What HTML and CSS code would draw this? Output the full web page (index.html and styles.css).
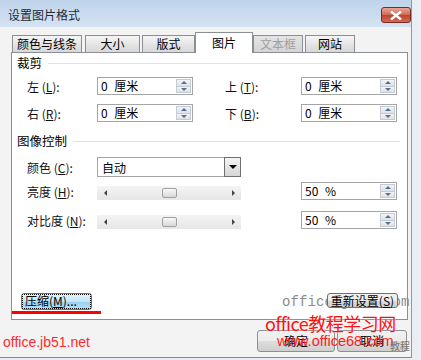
FILE: index.html
```html
<!DOCTYPE html>
<html lang="zh-CN">
<head>
    <meta charset="UTF-8">
    <meta name="viewport" content="width=device-width, initial-scale=1.0">
    <title>设置图片格式</title>
    <link rel="stylesheet" href="styles.css">
</head>
<body>
    <div class="window">
        <div class="titlebar">
            <span class="title">设置图片格式</span>
            <span class="close">
                <svg width="12" height="9" viewBox="0 0 12 9"><path d="M1 0.5 L11 8.5 M11 0.5 L1 8.5" stroke="#fff" stroke-width="2.4"/></svg>
            </span>
        </div>

        <div class="client">
            <div class="tabs">
                <div class="tab w70">颜色与线条</div>
                <div class="tab w55">大小</div>
                <div class="tab w53">版式</div>
                <div class="tab active">图片</div>
                <div class="tab w50 disabled">文本框</div>
                <div class="tab w50">网站</div>
            </div>

            <div class="panel">
                <div class="group">裁剪</div>
                <div class="row crop first">
                    <label class="lbl">左 (<u>L</u>):</label>
                    <div class="spin"><span>0 厘米</span><i class="arrows"><b class="up"></b><b class="down"></b></i></div>
                    <label class="lbl right">上 (<u>T</u>):</label>
                    <div class="spin"><span>0 厘米</span><i class="arrows"><b class="up"></b><b class="down"></b></i></div>
                </div>
                <div class="row crop">
                    <label class="lbl">右 (<u>R</u>):</label>
                    <div class="spin"><span>0 厘米</span><i class="arrows"><b class="up"></b><b class="down"></b></i></div>
                    <label class="lbl right">下 (<u>B</u>):</label>
                    <div class="spin"><span>0 厘米</span><i class="arrows"><b class="up"></b><b class="down"></b></i></div>
                </div>

                <div class="group second">图像控制</div>
                <div class="row color">
                    <label class="lbl">颜色 (<u>C</u>):</label>
                    <div class="combo"><span>自动</span><i class="drop"></i></div>
                </div>
                <div class="row level bright">
                    <label class="lbl">亮度 (<u>H</u>):</label>
                    <div class="slider"><i class="tri left"></i><i class="thumb"></i><i class="tri rt"></i></div>
                    <div class="spin pct"><span>50 %</span><i class="arrows"><b class="up"></b><b class="down"></b></i></div>
                </div>
                <div class="row level contrast">
                    <label class="lbl">对比度 (<u>N</u>):</label>
                    <div class="slider"><i class="tri left"></i><i class="thumb"></i><i class="tri rt"></i></div>
                    <div class="spin pct"><span>50 %</span><i class="arrows"><b class="up"></b><b class="down"></b></i></div>
                </div>

                <div class="panel-bottom">
                    <button class="btn compress"><span>压缩(<u>M</u>)...</span></button>
                    <button class="btn reset">重新设置(<u>S</u>)</button>
                </div>
            </div>

            <div class="dialog-buttons">
                <button class="btn ok">确定</button>
                <button class="btn cancel">取消</button>
            </div>
        </div>

        <!-- watermarks pasted over the shot -->
        <div class="mark-line"></div>
        <div class="mark-gray">office.jb51.com</div>
        <div class="mark-big">office教程学习网</div>
        <div class="mark-url">www.office68.com</div>
        <div class="mark-site">office.jb51.net</div>
        <div class="mark-tag">教程</div>
    </div>
</body>
</html>
```

FILE: styles.css
```css
*, *::before, *::after{
    box-sizing: border-box;
    margin: 0;
    padding: 0;
}

body{
    width: 421px;
    height: 360px;
    overflow: hidden;
    background: #e9eef4;
    font-family: "Noto Sans CJK SC", "Liberation Sans", sans-serif;
    font-size: 12px;
    color: #000;
}

u{
    text-decoration: underline;
}

.window{
    position: relative;
    width: 412px;
    height: 358px;
    background: #f3f3f3;
    border-right: 1px solid #8a98a8;
    border-bottom: 1px solid #7d8894;
}

.titlebar{
    height: 27px;
    display: flex;
    align-items: center;
    justify-content: space-between;
    padding-left: 8px;
    background: linear-gradient(#bfd4ea, #d4e3f3);
    .title{
        font-size: 12px;
        color: #1e2a36;
        margin-top: 2px;
    }
    .close{
        width: 30px;
        height: 16px;
        align-self: flex-end;
        margin-bottom: 4px;
        display: flex;
        align-items: center;
        justify-content: center;
        border: 1px solid #7a2a22;
        border-radius: 3px;
        background: linear-gradient(#e7a796, #d26a55 50%, #c0432e 51%, #d26b50);
    }
}

.client{
    padding: 5px 0 0 11px;
}

.tabs{
    display: flex;
    align-items: flex-end;
    height: 20px;
    padding-left: 1px;
    position: relative;
    z-index: 1;
}

.tab{
    height: 17px;
    line-height: 15px;
    text-align: center;
    border: 1px solid #8a8f96;
    border-bottom: none;
    margin-right: 2px;
    background: linear-gradient(#f6f6f6, #e2e2e2 60%, #d8d8d8);
    &.w70{ width: 70px; margin-right: 3px; }
    &.w55{ width: 55px; }
    &.w53{ width: 53px; margin-right: 0; }
    &.w50{ width: 50px; }
    &.active{
        width: 58px;
        height: 21px;
        line-height: 19px;
        background: #fff;
        margin-bottom: -1px;
        margin-right: 0;
    }
    &.disabled{
        color: #a0a0a0;
        background: linear-gradient(#e4e4e4, #d4d4d4);
    }
}

.panel{
    width: 397px;
    height: 268px;
    background: #fff;
    border: 1px solid #8a8f96;
    padding: 3px 0 0 5px;
    display: flex;
    flex-direction: column;
}

.group{
    display: flex;
    align-items: center;
    height: 14px;
    font-size: 12.5px;
    line-height: 14px;
    gap: 6px;
    &::after{
        content: "";
        flex: 1;
        height: 1px;
        margin-right: 7px;
        background: #dde3e8;
    }
    &.second{
        margin-top: 12px;
    }
}

.row{
    display: flex;
    align-items: center;
    padding-left: 10px;
    &.crop{ height: 18px; margin-top: 9px; }
    &.crop.first{ margin-top: 7px; }
    &.color{ height: 20px; margin-top: 9px; }
    &.bright{ height: 18px; margin-top: 5px; }
    &.contrast{ height: 18px; margin-top: 11px; }
}

.lbl{
    width: 70px;
    color: #111;
    &.right{
        width: 76px;
        margin-left: 32px;
    }
}

.spin{
    width: 96px;
    height: 18px;
    border: 1px solid #a5a5a5;
    display: flex;
    align-items: center;
    justify-content: space-between;
    padding-left: 3px;
    background: #fff;
    &.pct{
        margin-left: 60px;
    }
    span{
        line-height: 16px;
        word-spacing: 4px;
    }
}

.arrows{
    display: flex;
    flex-direction: column;
    width: 15px;
    height: 14px;
    margin-right: 1px;
    b{
        flex: 1;
        display: flex;
        align-items: center;
        justify-content: center;
        background: linear-gradient(#f2f4f7, #dde2e8);
        border: 1px solid #c5cbd3;
    }
    b + b{
        border-top: none;
    }
    b::before{
        content: "";
        border-left: 3px solid transparent;
        border-right: 3px solid transparent;
    }
    .up::before{ border-bottom: 3px solid #5a6f8c; }
    .down::before{ border-top: 3px solid #5a6f8c; }
}

.combo{
    width: 144px;
    height: 20px;
    border: 1px solid #a5a5a5;
    display: flex;
    align-items: center;
    justify-content: space-between;
    padding-left: 4px;
    .drop{
        width: 17px;
        height: 20px;
        margin-right: -1px;
        border: 1px solid #6f6f6f;
        background: linear-gradient(#f4f4f4, #d6d6d6);
        display: flex;
        align-items: center;
        justify-content: center;
    }
    .drop::before{
        content: "";
        border-left: 4px solid transparent;
        border-right: 4px solid transparent;
        border-top: 4px solid #000;
    }
}

.slider{
    position: relative;
    width: 144px;
    height: 14px;
    margin-top: 4px;
    background: linear-gradient(#f4f4f4, #e6e6e6);
    .tri{
        position: absolute;
        top: 4px;
        border-top: 3px solid transparent;
        border-bottom: 3px solid transparent;
    }
    .left{
        left: 7px;
        border-right: 3px solid #444;
    }
    .rt{
        right: 6px;
        border-left: 3px solid #444;
    }
    .thumb{
        position: absolute;
        left: 65px;
        top: 2px;
        width: 15px;
        height: 10px;
        border: 1px solid #a0a0a0;
        border-radius: 2px;
        background: linear-gradient(#f8f8f8, #d8d8d8);
    }
}

.panel-bottom{
    margin-top: auto;
    margin-bottom: 9px;
    display: flex;
    justify-content: space-between;
    align-items: flex-start;
    padding: 0 9px 0 4px;
}

.btn{
    font-family: inherit;
    font-size: 12px;
    color: #000;
    border: 1px solid #707070;
    border-radius: 3px;
    background: linear-gradient(#f2f2f2, #ebebeb 50%, #dddddd 51%, #cfcfcf);
}

.compress{
    width: 71px;
    height: 17px;
    padding: 1px;
    border-color: #3c7fb1;
    background: linear-gradient(#e5f4fc, #c4e5f6 50%, #98d1ef 51%, #b6e0f5);
    span{
        display: block;
        height: 13px;
        line-height: 12px;
        text-align: left;
        padding-left: 2px;
        outline: 1px dotted #000;
    }
}

.reset{
    width: 71px;
    height: 15px;
    line-height: 12px;
    position: relative;
    z-index: 2;
}

.dialog-buttons{
    display: flex;
    gap: 2px;
    padding-left: 246px;
    margin-top: 10px;
    .btn{
        height: 22px;
        line-height: 18px;
        border-color: #8f8f8f;
    }
    .ok{ width: 78px; }
    .cancel{ width: 70px; }
}

.mark-line{
    position: absolute;
    left: 12px;
    top: 311px;
    width: 89px;
    height: 3px;
    background: #ff0000;
}

.mark-gray{
    position: absolute;
    left: 282px;
    top: 294px;
    font-family: "Liberation Mono", monospace;
    font-size: 14px;
    letter-spacing: 0.1px;
    color: #8c8c8c;
    z-index: 1;
}

.mark-big{
    position: absolute;
    left: 265px;
    top: 312px;
    font-size: 18px;
    line-height: 22px;
    letter-spacing: -0.5px;
    color: #ff1010;
    text-shadow: 0 0 2px #fff;
    z-index: 3;
}

.mark-url{
    position: absolute;
    left: 277px;
    top: 333px;
    font-family: "Liberation Sans", sans-serif;
    font-size: 14.5px;
    color: #ff1a1a;
    z-index: 3;
}

.mark-site{
    position: absolute;
    left: 3px;
    top: 334px;
    font-family: "Liberation Sans", sans-serif;
    font-size: 14px;
    color: #ff2a2a;
}

.mark-tag{
    position: absolute;
    left: 390px;
    top: 338px;
    font-size: 10px;
    white-space: nowrap;
    color: #777;
    z-index: 3;
}
```
